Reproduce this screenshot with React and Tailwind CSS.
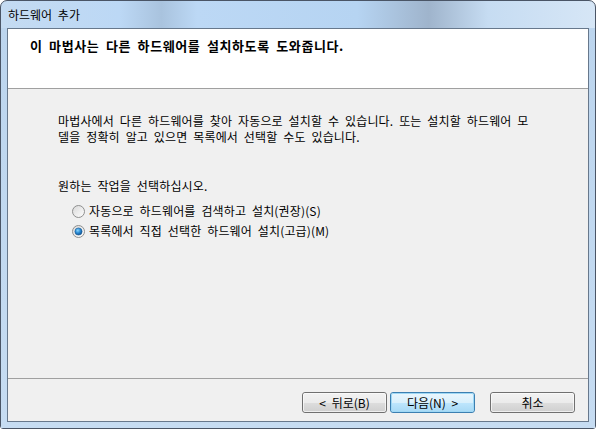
import React from "react";

const font = { fontFamily: '"Noto Sans CJK KR", "Noto Sans", sans-serif' };

function Radio({ checked }) {
  return (
    <svg width="13" height="13" viewBox="0 0 13 13" className="shrink-0">
      <defs>
        <linearGradient id={checked ? "rg1" : "rg0"} x1="0" y1="0" x2="1" y2="1">
          <stop offset="0" stopColor="#d8d8d8" />
          <stop offset="1" stopColor="#ffffff" />
        </linearGradient>
        <radialGradient id="dot" cx="0.4" cy="0.35" r="0.7">
          <stop offset="0" stopColor="#8ad8ff" />
          <stop offset="0.5" stopColor="#2a8ad4" />
          <stop offset="1" stopColor="#0d4c8a" />
        </radialGradient>
      </defs>
      <circle cx="6.5" cy="6.5" r="6" fill={`url(#${checked ? "rg1" : "rg0"})`} stroke="#8e8f8f" strokeWidth="1" />
      {checked && <circle cx="6.5" cy="6.5" r="3.6" fill="url(#dot)" stroke="#1b5b93" strokeWidth="0.6" />}
    </svg>
  );
}

function Btn({ children, def }) {
  return (
    <div
      className={
        "w-[85px] h-[21px] rounded-[3px] border flex items-center justify-center text-[12px] text-black leading-none " +
        (def
          ? "border-[#3c7fb1] bg-[linear-gradient(#eaf6fd_0%,#d9f0fc_50%,#bee6fd_51%,#a7d9f5_100%)]"
          : "border-[#707070] bg-[linear-gradient(#f2f2f2_0%,#ebebeb_50%,#dddddd_51%,#cfcfcf_100%)]")
      }
    >
      <div className={"w-full h-full rounded-[2px] border flex items-center justify-center " + (def ? "border-[#9fd8f5]" : "border-[#fcfcfc]/70")}>
        {children}
      </div>
    </div>
  );
}

export default function App() {
  return (
    <div className="w-[596px] h-[429px] bg-white [word-spacing:3px]" style={font}>
      <div className="w-[596px] h-[429px] rounded-t-[7px] rounded-b-[3px] border border-[#4a5566] bg-[linear-gradient(90deg,#c4dbf2_0%,#bcd8f5_20%,#a9c3de_27%,#bcd8f5_33%,#b6d4f2_60%,#9fb4cc_72%,#c6dcf2_82%,#d6e6f6_100%)] flex flex-col">
        <div className="h-[27px] flex items-center pl-[7px] text-[12px] text-black shrink-0">하드웨어 추가</div>
        <div className="flex-1 flex px-[6px] pb-[6px] bg-[linear-gradient(#bcd5ee,#c6dcf2)]">
          <div className="flex-1 border border-[#67788c] bg-[#f0f0f0] flex flex-col">
            <div className="h-[60px] bg-white border-b border-[#a0a0a0] pl-[22px] pt-[7px] text-[13px] tracking-[0.6px] font-bold text-black shrink-0">
              이 마법사는 다른 하드웨어를 설치하도록 도와줍니다.
            </div>
            <div className="flex-1 pl-[50px] pt-[24px] text-[12px] tracking-[0.15px] text-black leading-[16px]">
              <div>
                마법사에서 다른 하드웨어를 찾아 자동으로 설치할 수 있습니다. 또는 설치할 하드웨어 모
                <br />
                델을 정확히 알고 있으면 목록에서 선택할 수도 있습니다.
              </div>
              <div className="mt-[33px]">원하는 작업을 선택하십시오.</div>
              <div className="pl-[14px] mt-[9px] flex flex-col gap-[4px]">
                <div className="flex items-center gap-[4px] h-[16px]">
                  <Radio />
                  <span>자동으로 하드웨어를 검색하고 설치(권장)(S)</span>
                </div>
                <div className="flex items-center gap-[4px] h-[16px]">
                  <Radio checked />
                  <span>목록에서 직접 선택한 하드웨어 설치(고급)(M)</span>
                </div>
              </div>
            </div>
            <div className="h-[43px] border-t border-[#a0a0a0] flex items-start justify-end pt-[13px] pr-[13px] shrink-0">
              <div className="flex gap-[3px]">
                <Btn>&lt; 뒤로(B)</Btn>
                <Btn def>다음(N) &gt;</Btn>
              </div>
              <div className="ml-[15px]">
                <Btn>취소</Btn>
              </div>
            </div>
          </div>
        </div>
      </div>
    </div>
  );
}
